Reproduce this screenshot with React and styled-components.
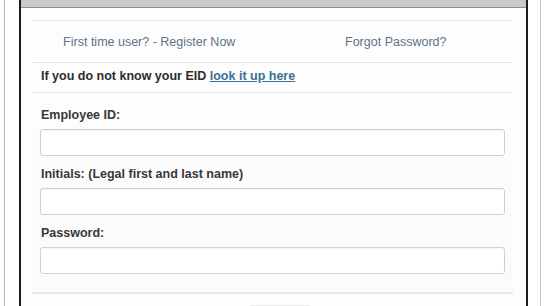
import React from "react";
import styled, { createGlobalStyle } from "styled-components";

const Global = createGlobalStyle`
  html, body { margin: 0; padding: 0; background: #ffffff; }
  body { font-family: "Liberation Sans", Arial, sans-serif; overflow: hidden; }
  * { box-sizing: border-box; }
`;

const Frame = styled.div`
  margin-left: 4px;
  width: 537px;
  height: 306px;
  border-left: 1px solid #b8b8b8;
  border-right: 1px solid #c4c4c4;
  padding-left: 14px;
  overflow: hidden;
`;

const Panel = styled.div`
  width: 509px;
  height: 306px;
  border-left: 2px solid #1c1c1c;
  border-right: 2px solid #1c1c1c;
  background: #fdfdfd;
  display: flex;
  flex-direction: column;
`;

const HeaderBar = styled.div`
  height: 8px;
  background: #c9c9c9;
  border-bottom: 1px solid #8e8e8e;
  flex: none;
`;

const Body = styled.div`
  padding: 12px 13px 0 11px;
  display: flex;
  flex-direction: column;
`;

const Rule = styled.div`
  height: ${(p) => p.$h || 1}px;
  background: ${(p) => p.$c || "#e6e6e6"};
  flex: none;
`;

const LinkRow = styled.div`
  display: grid;
  grid-template-columns: 1fr 1fr;
  height: 41px;
  align-items: center;
`;

const TopLink = styled.a`
  text-align: center;
  font-size: 12.5px;
  color: #5e7488;
  text-decoration: none;
  padding-left: ${(p) => p.$padL || 0}px;
  padding-right: ${(p) => p.$padR || 0}px;
`;

const EidRow = styled.div`
  padding: 5px 9px 7px;
  font-size: 12.5px;
  line-height: 17px;
  font-weight: bold;
  color: #2c2c2c;
`;

const EidLink = styled.a`
  color: #3a7196;
  text-decoration: underline;
`;

const Form = styled.div`
  padding: 14px 8px 18px;
  display: flex;
  flex-direction: column;
  background: linear-gradient(#fdfdfd, #fafafa);
`;

const Field = styled.div`
  display: flex;
  flex-direction: column;
  gap: 5px;
  margin-bottom: ${(p) => (p.$last ? 0 : 10)}px;
`;

const Label = styled.label`
  font-size: 12.5px;
  line-height: 17px;
  font-weight: bold;
  color: #383838;
  padding-left: 1px;
`;

const Input = styled.input`
  height: 27px;
  width: 100%;
  border: 1px solid #d0d0d0;
  border-radius: 3px;
  background: #ffffff;
  box-shadow: inset 0 1px 1px rgba(0, 0, 0, 0.04);
  outline: none;
  font: 13px "Liberation Sans", Arial, sans-serif;
  padding: 0 8px;
`;

const ButtonArea = styled.div`
  display: flex;
  justify-content: center;
  padding-top: 11px;
`;

const SubmitButton = styled.button`
  width: 62px;
  height: 26px;
  border: 1px solid #ececec;
  border-radius: 3px;
  background: #fafafa;
  margin-left: 14px;
`;

export default function App() {
  return (
    <>
      <Global />
      <Frame>
        <Panel>
          <HeaderBar />
          <Body>
            <Rule />
            <LinkRow>
              <TopLink href="#" $padR={6}>First time user? - Register Now</TopLink>
              <TopLink href="#" $padL={6}>Forgot Password?</TopLink>
            </LinkRow>
            <Rule />
            <EidRow>
              If you do not know your EID <EidLink href="#">look it up here</EidLink>
            </EidRow>
            <Rule />
            <Form>
              <Field>
                <Label>Employee ID:</Label>
                <Input type="text" />
              </Field>
              <Field>
                <Label>Initials: (Legal first and last name)</Label>
                <Input type="text" />
              </Field>
              <Field $last>
                <Label>Password:</Label>
                <Input type="password" />
              </Field>
            </Form>
            <Rule $h={2} $c="#e8e8e8" />
            <ButtonArea>
              <SubmitButton aria-label="Sign in" />
            </ButtonArea>
          </Body>
        </Panel>
      </Frame>
    </>
  );
}
